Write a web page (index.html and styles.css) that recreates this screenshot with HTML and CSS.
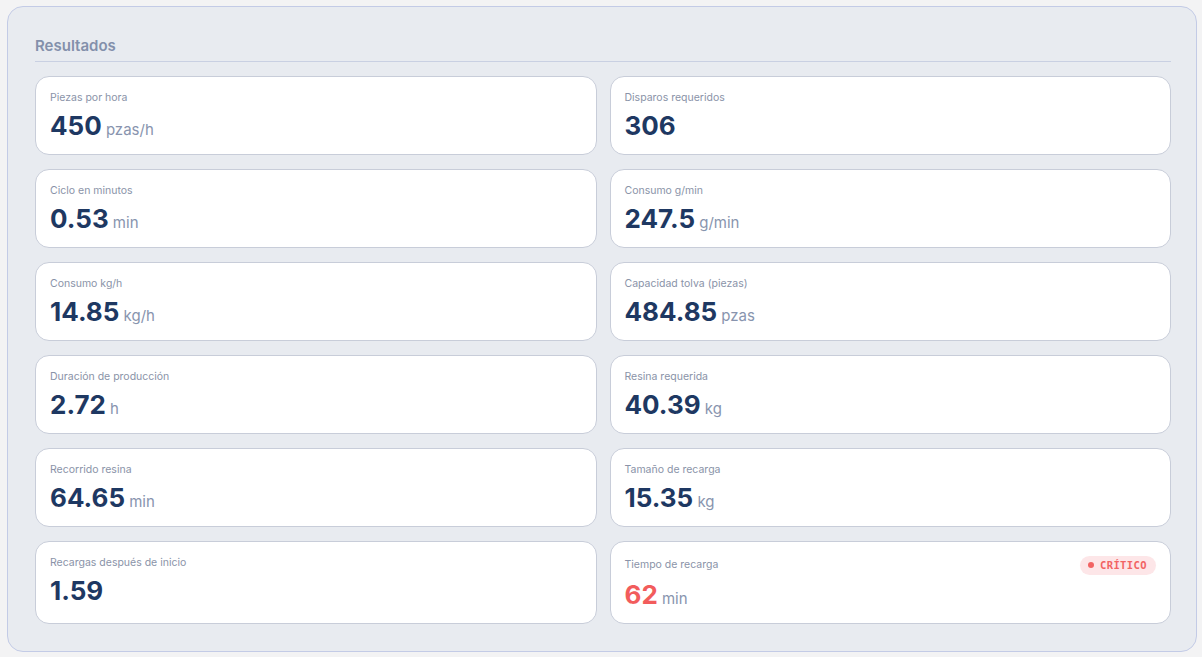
FILE: index.html
```html
<!DOCTYPE html>
<html lang="es">
<head>
    <meta charset="UTF-8">
    <meta name="viewport" content="width=device-width, initial-scale=1.0">
    <title>Resultados</title>
    <link rel="stylesheet" href="styles.css">
</head>
<body>
    <div class="panel">
        <h2 class="panel-title">Resultados</h2>

        <div class="results-grid">
            <div class="result-card">
                <div class="card-head"><span class="card-label">Piezas por hora</span></div>
                <div class="card-value">450 <span class="unit">pzas/h</span></div>
            </div>
            <div class="result-card">
                <div class="card-head"><span class="card-label">Disparos requeridos</span></div>
                <div class="card-value">306</div>
            </div>
            <div class="result-card">
                <div class="card-head"><span class="card-label">Ciclo en minutos</span></div>
                <div class="card-value">0.53 <span class="unit">min</span></div>
            </div>
            <div class="result-card">
                <div class="card-head"><span class="card-label">Consumo g/min</span></div>
                <div class="card-value">247.5 <span class="unit">g/min</span></div>
            </div>
            <div class="result-card">
                <div class="card-head"><span class="card-label">Consumo kg/h</span></div>
                <div class="card-value">14.85 <span class="unit">kg/h</span></div>
            </div>
            <div class="result-card">
                <div class="card-head"><span class="card-label">Capacidad tolva (piezas)</span></div>
                <div class="card-value">484.85 <span class="unit">pzas</span></div>
            </div>
            <div class="result-card">
                <div class="card-head"><span class="card-label">Duración de producción</span></div>
                <div class="card-value">2.72 <span class="unit">h</span></div>
            </div>
            <div class="result-card">
                <div class="card-head"><span class="card-label">Resina requerida</span></div>
                <div class="card-value">40.39 <span class="unit">kg</span></div>
            </div>
            <div class="result-card">
                <div class="card-head"><span class="card-label">Recorrido resina</span></div>
                <div class="card-value">64.65 <span class="unit">min</span></div>
            </div>
            <div class="result-card">
                <div class="card-head"><span class="card-label">Tamaño de recarga</span></div>
                <div class="card-value">15.35 <span class="unit">kg</span></div>
            </div>
            <div class="result-card">
                <div class="card-head"><span class="card-label">Recargas después de inicio</span></div>
                <div class="card-value">1.59</div>
            </div>
            <div class="result-card">
                <div class="card-head">
                    <span class="card-label">Tiempo de recarga</span>
                    <span class="badge-critical"><span class="dot"></span>CRÍTICO</span>
                </div>
                <div class="card-value critical">62 <span class="unit">min</span></div>
            </div>
        </div>
    </div>
</body>
</html>
```

FILE: styles.css
```css
body {
    font-family: Inter, "Noto Sans", sans-serif;
    background-color: #f3f3f4;
    margin: 0;
    padding: 6px 5px 6px 7px;
}

.panel {
    background-color: #e8ebf0;
    border: 1px solid #c3cbe6;
    border-radius: 16px;
    padding: 29px 25px 27px 27px;
}

.panel-title {
    margin: 0;
    font-size: 15px;
    font-weight: 600;
    line-height: 20px;
    color: #8390ab;
    padding-bottom: 5px;
    border-bottom: 1px solid #c9d0e2;
}

.results-grid {
    margin-top: 14px;
    display: grid;
    grid-template-columns: 1fr 1fr;
    column-gap: 13px;
    row-gap: 14px;
}

.result-card {
    background-color: white;
    border: 1px solid #c8cdd9;
    border-radius: 14px;
    padding: 13px 14px 12px 14px;
}

.card-head {
    display: flex;
    justify-content: space-between;
    align-items: center;
    height: 16px;
}

.card-head:has(.badge-critical) {
    height: 20px;
}

.card-label {
    font-size: 10.5px;
    line-height: 16px;
    color: #8a93a8;
}

.card-value {
    margin-top: 4px;
    font-size: 26px;
    font-weight: 700;
    color: #1e3862;
    line-height: 32px;
    height: 32px;
    word-spacing: -2px;
}

.card-value .unit {
    font-size: 15px;
    font-weight: 400;
    line-height: 1;
    color: #8894ae;
    word-spacing: 0;
}

.card-value.critical {
    color: #f25c5c;
}

.badge-critical {
    display: flex;
    align-items: center;
    gap: 6px;
    background-color: #fde6e8;
    color: #f26363;
    font-family: "DejaVu Sans Mono", monospace;
    font-size: 10.5px;
    font-weight: 700;
    letter-spacing: 0.4px;
    padding: 0 9px 0 8px;
    height: 19px;
    border-radius: 10px;
}

.badge-critical .dot {
    width: 6px;
    height: 6px;
    border-radius: 50%;
    background-color: #f26363;
}
```
